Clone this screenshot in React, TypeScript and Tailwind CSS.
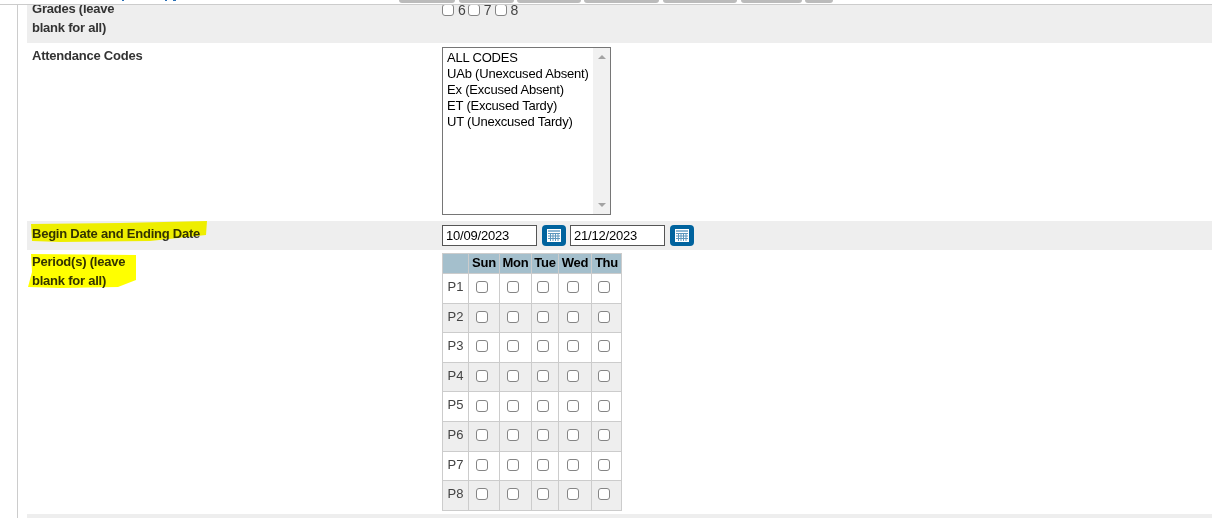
const periods = ["P1", "P2", "P3", "P4", "P5", "P6", "P7", "P8"];
const days = ["Sun", "Mon", "Tue", "Wed", "Thu"];
const widths = ["w-[31px]", "w-[32px]", "w-[27px]", "w-[33px]", "w-[30px]"];
const boxPad = ["pl-[7px]", "pl-[7px]", "pl-[5px]", "pl-[8px]", "pl-[6px]"];
const tabs = [
  "w-[56px] ml-0",
  "w-[55px] ml-[4px]",
  "w-[64px] ml-[3px]",
  "w-[75px] ml-[3px]",
  "w-[74px] ml-[4px]",
  "w-[61px] ml-[4px]",
  "w-[28px] ml-[3px]",
];
const labelCls = "w-[410px] pl-[5px] text-[13px] font-bold leading-[19px] tracking-[-0.23px]";

function Box() {
  return <span className="inline-block h-[12px] w-[12px] shrink-0 rounded-[3px] border border-[#858585] bg-white" />;
}

function Cal() {
  return (
    <span className="flex h-[21px] w-[24px] shrink-0 items-center justify-center rounded-[4px] bg-[#00639e]">
      <svg width="14" height="13" viewBox="0 0 14 13">
        <rect x="0" y="0" width="14" height="13" fill="#fff" />
        <rect x="1" y="1" width="12" height="2" fill="#8fb8d3" />
        <path d="M1 4.5H13M1 7H13M1 9.5H13M3.5 4V12M6 4V12M8.5 4V12M11 4V12" stroke="#5c97bd" strokeWidth="1" />
      </svg>
    </span>
  );
}

function DateInput({ v }: { v: string }) {
  return (
    <span className="flex h-[21px] w-[95px] shrink-0 items-center border border-[#555] bg-white pl-[3px] text-[13px] tracking-[-0.2px] text-black">{v}</span>
  );
}

export default function App() {
  return (
    <div className="relative h-[518px] w-[1212px] overflow-hidden bg-white font-['Liberation_Sans',Arial,sans-serif] text-[#333]">
      <div className="relative flex h-[5px] overflow-hidden border-b border-[#ccc] pl-[399px]">
        {tabs.map((t, i) => (
          <span key={i} className={t + " h-[3px] rounded-b-[3px] bg-[#bbb]"} />
        ))}
        <svg className="absolute left-0 top-0" width="200" height="2" viewBox="0 0 200 2">
          <path d="M122 0H124M165 0H167M173 0H176" stroke="#2a6fb5" strokeWidth="2" />
        </svg>
      </div>
      <div className="ml-[17px] flex h-[513px] flex-col border-l border-[#ccc] pl-[9px]">
        <div className="flex h-[38px] overflow-hidden bg-[#eee]">
          <div className={labelCls + " -mt-[6px]"}>Grades (leave<br />blank for all)</div>
          <div className="-mt-[2px] flex h-[14px] items-center pl-[5px] text-[14px] leading-none text-[#444]">
            <Box /><span className="ml-[4px] mr-[2px]">6</span><Box /><span className="ml-[4px] mr-[3px]">7</span><Box /><span className="ml-[4px]">8</span>
          </div>
        </div>
        <div className="mt-[1px] flex h-[177px]">
          <div className={labelCls + " pt-[2px]"}>Attendance Codes</div>
          <div className="ml-[5px] mt-[3px] flex h-[168px] w-[169px] border border-[#767676] text-[13px] leading-[16px] tracking-[-0.2px] text-black">
            <div className="flex-1 whitespace-nowrap pl-[4px] pt-[2px]">
              <div>ALL CODES</div>
              <div>UAb (Unexcused Absent)</div>
              <div>Ex (Excused Absent)</div>
              <div>ET (Excused Tardy)</div>
              <div>UT (Unexcused Tardy)</div>
            </div>
            <div className="relative w-[17px] shrink-0 bg-[#f1f1f1]">
              <span className="absolute left-[5px] top-[7px] h-0 w-0 border-x-[4px] border-b-[4px] border-x-transparent border-b-[#a3a3a3]" />
              <span className="absolute bottom-[7px] left-[5px] h-0 w-0 border-x-[4px] border-t-[4px] border-x-transparent border-t-[#a3a3a3]" />
            </div>
          </div>
        </div>
        <div className="flex h-[29px] bg-[#eee]">
          <div className={labelCls + " pt-[3px]"}>Begin Date and Ending Date</div>
          <div className="flex items-center pl-[5px]">
            <DateInput v="10/09/2023" />
            <span className="ml-[5px] mr-[4px]"><Cal /></span>
            <DateInput v="21/12/2023" />
            <span className="ml-[5px]"><Cal /></span>
          </div>
        </div>
        <div className="flex h-[264px]">
          <div className={labelCls + " pt-[2px]"}>Period(s) (leave<br />blank for all)</div>
          <div className="pl-[5px] pt-[3px]">
            <div className="w-[180px] border-b border-r border-[#ccc]">
              <div className="flex h-[20px] bg-[#a4bfcc] text-[13px] font-bold tracking-[-0.2px] text-black">
                <div className="w-[26px] border-l border-t border-[#ccc]" />
                {days.map((d, i) => (
                  <div key={d} className={widths[i] + " flex items-center justify-center border-l border-t border-[#ccc] pb-[2px]"}>{d}</div>
                ))}
              </div>
              {periods.map((p, r) => (
                <div key={p} className={"flex h-[29.6px] " + (r % 2 ? "bg-[#eee]" : "bg-white")}>
                  <div className="flex w-[26px] items-center justify-center border-l border-t border-[#ccc] pb-[3px] text-[13px] text-[#444]">{p}</div>
                  {days.map((d, i) => (
                    <div key={d} className={widths[i] + " " + boxPad[i] + " flex items-center border-l border-t border-[#ccc] pb-[2px]"}><Box /></div>
                  ))}
                </div>
              ))}
            </div>
          </div>
        </div>
        <div className="h-[4px] bg-[#eee]" />
      </div>
      <svg className="pointer-events-none absolute left-0 top-0 mix-blend-multiply" width="240" height="300" viewBox="0 0 240 300">
        <path d="M31 224 L120 223 L207 221 L206 235 L150 241 L60 242 L32 241 Z" fill="#ffff00" />
        <path d="M31 254 L136 255 L136 280 L118 287 L60 288 L28 287 L32 272 Z" fill="#ffff00" />
      </svg>
    </div>
  );
}
